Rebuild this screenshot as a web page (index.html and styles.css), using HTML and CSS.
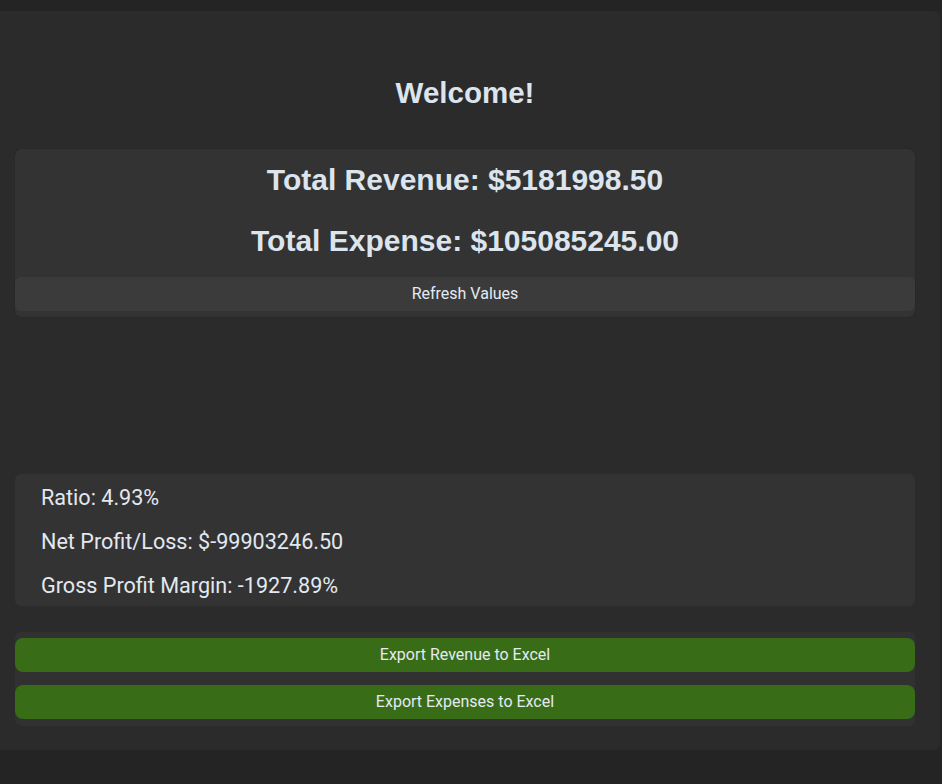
FILE: index.html
```html
<!DOCTYPE html>
<html lang="en">
<head>
<meta charset="utf-8">
<title>Dashboard</title>
<link rel="stylesheet" href="styles.css">
</head>
<body>
<main class="panel">
  <h1 class="welcome">Welcome!</h1>
  <section class="totals">
    <h2 class="total">Total Revenue: $5181998.50</h2>
    <h2 class="total total-exp">Total Expense: $105085245.00</h2>
    <button class="btn btn-refresh" type="button">Refresh Values</button>
  </section>
  <div class="chart-area"></div>
  <section class="metrics">
    <p class="metric">Ratio: 4.93%</p>
    <p class="metric">Net Profit/Loss: $-99903246.50</p>
    <p class="metric">Gross Profit Margin: -1927.89%</p>
  </section>
  <section class="exports">
    <button class="btn btn-green" type="button">Export Revenue to Excel</button>
    <button class="btn btn-green" type="button">Export Expenses to Excel</button>
  </section>
</main>
</body>
</html>
```

FILE: styles.css
```css
html, body {
  margin: 0;
  padding: 0;
}
body {
  background: #242424;
  padding-top: 11px;
  color: #dce4ee;
  font-family: Roboto, "Liberation Sans", sans-serif;
}
.panel {
  width: 940px;
  box-sizing: border-box;
  background: #2b2b2b;
  border-radius: 0 6px 6px 0;
  padding: 65px 25px 24px 15px;
}
.welcome {
  margin: 0 0 39px;
  font-family: "Liberation Sans", Arial, sans-serif;
  font-weight: bold;
  font-size: 29.5px;
  line-height: 34px;
  text-align: center;
  color: #dce4ee;
}
.totals {
  background: #333333;
  border-radius: 6px;
  padding: 14px 0 6px;
  display: flex;
  flex-direction: column;
  box-shadow: 0 0 1px rgba(0, 0, 0, 0.5);
}
.total {
  margin: 0;
  font-family: "Liberation Sans", Arial, sans-serif;
  font-weight: bold;
  font-size: 30px;
  line-height: 34px;
  text-align: center;
  color: #dce4ee;
}
.total-exp {
  margin-top: 27px;
  margin-bottom: 19px;
}
.btn {
  display: block;
  width: 100%;
  height: 34px;
  border: none;
  border-radius: 6px;
  font-family: Roboto, "Liberation Sans", sans-serif;
  font-size: 16px;
  color: #e4eaf2;
  padding: 0 0 2px;
  cursor: pointer;
}
.btn-refresh {
  background: #3b3b3b;
}
.chart-area {
  height: 157px;
}
.metrics {
  background: #333333;
  border-radius: 6px;
  height: 132px;
  box-sizing: border-box;
  padding: 2px 26px 0;
}
.metric {
  margin: 0;
  font-size: 21.6px;
  line-height: 44px;
  color: #e2e8f0;
}
.exports {
  margin-top: 26px;
  background: #313132;
  border-radius: 6px;
  padding: 6px 0 7px;
  display: flex;
  flex-direction: column;
  gap: 13px;
}
.btn-green {
  background: #386c17;
  border-radius: 8px;
}
```
